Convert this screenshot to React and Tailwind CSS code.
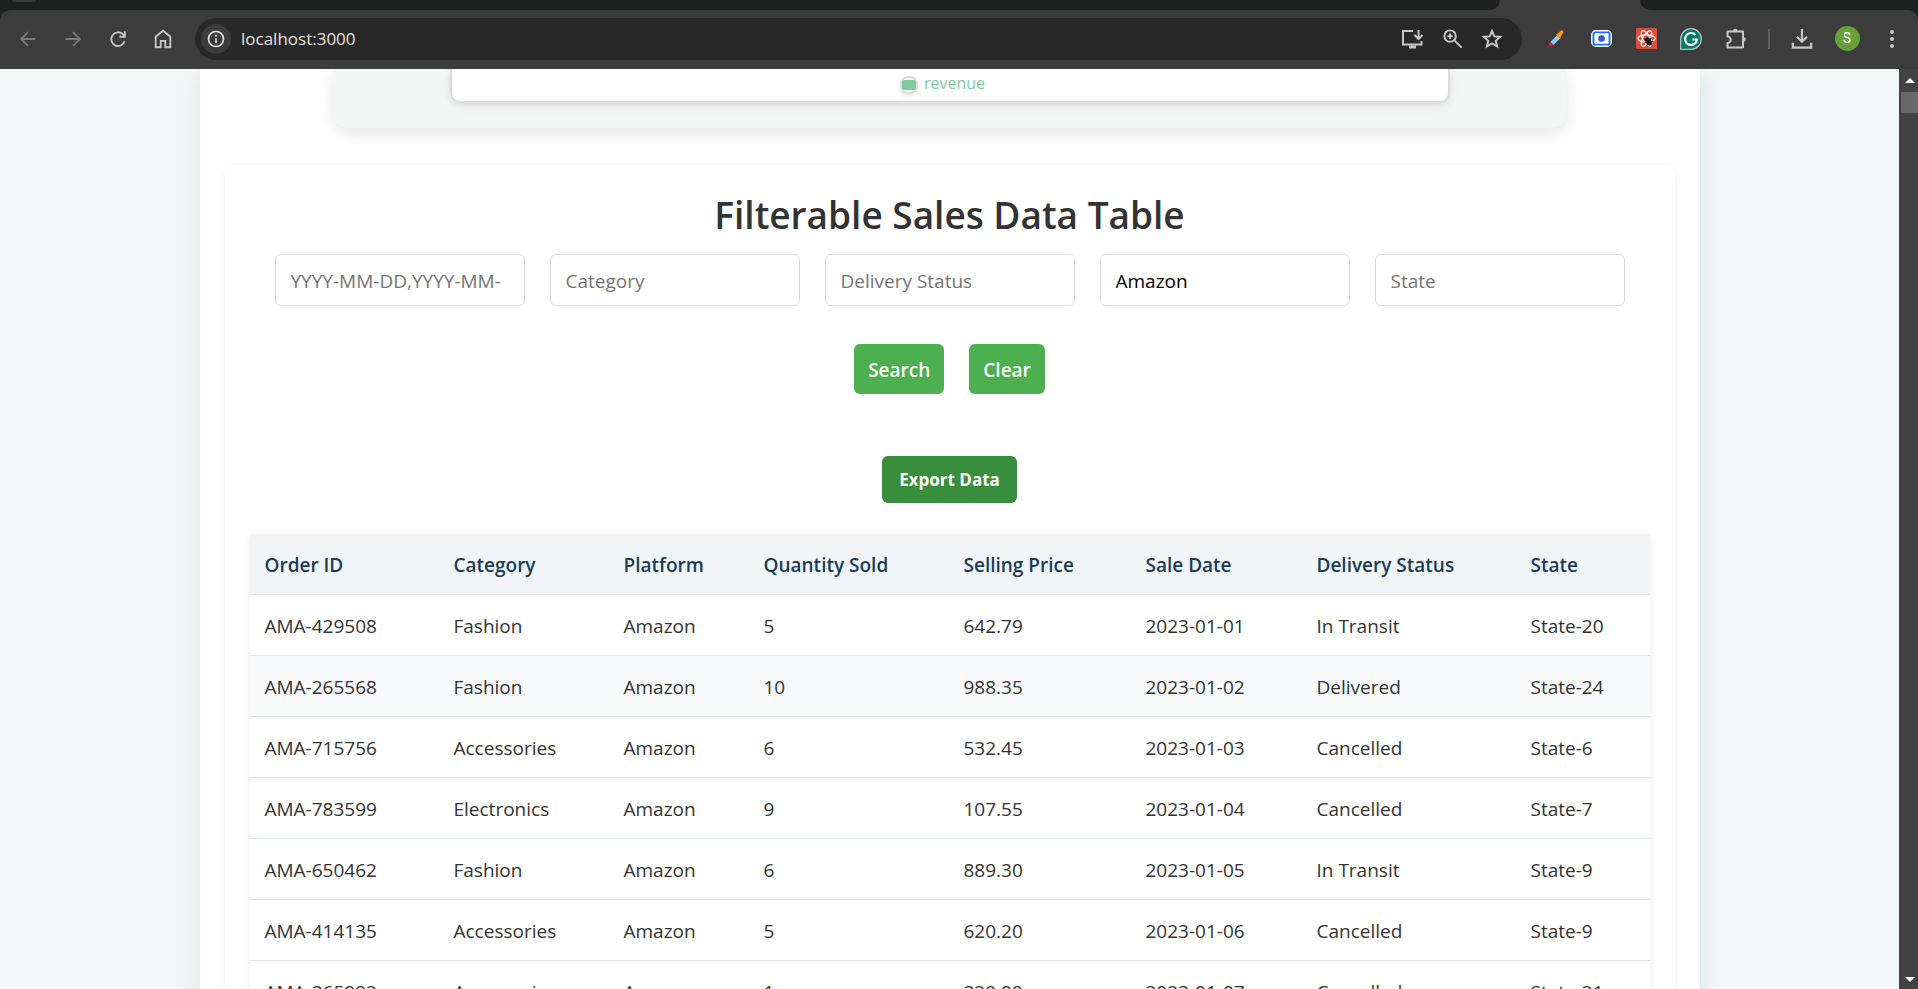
const columns = [
  ["Order ID", "w-[189px]"],
  ["Category", "w-[170px]"],
  ["Platform", "w-[140px]"],
  ["Quantity Sold", "w-[200px]"],
  ["Selling Price", "w-[182px]"],
  ["Sale Date", "w-[171px]"],
  ["Delivery Status", "w-[214px]"],
  ["State", ""],
];

const rows = [
  ["AMA-429508", "Fashion", "Amazon", "5", "642.79", "2023-01-01", "In Transit", "State-20"],
  ["AMA-265568", "Fashion", "Amazon", "10", "988.35", "2023-01-02", "Delivered", "State-24"],
  ["AMA-715756", "Accessories", "Amazon", "6", "532.45", "2023-01-03", "Cancelled", "State-6"],
  ["AMA-783599", "Electronics", "Amazon", "9", "107.55", "2023-01-04", "Cancelled", "State-7"],
  ["AMA-650462", "Fashion", "Amazon", "6", "889.30", "2023-01-05", "In Transit", "State-9"],
  ["AMA-414135", "Accessories", "Amazon", "5", "620.20", "2023-01-06", "Cancelled", "State-9"],
  ["AMA-365992", "Accessories", "Amazon", "1", "329.09", "2023-01-07", "Cancelled", "State-21"],
];

const filters = [
  { label: "Date range", placeholder: "YYYY-MM-DD,YYYY-MM-DD" },
  { label: "Category", placeholder: "Category" },
  { label: "Delivery status", placeholder: "Delivery Status" },
  { label: "Platform", placeholder: "Platform", value: "Amazon" },
  { label: "State", placeholder: "State" },
];

function Svg({ children, size = 24, className = "" }) {
  return (
    <svg
      width={size}
      height={size}
      viewBox="0 0 24 24"
      fill="none"
      stroke="currentColor"
      strokeWidth="2"
      className={className}
      aria-hidden="true"
    >
      {children}
    </svg>
  );
}

function IconButton({ label, className = "", children }) {
  return (
    <button aria-label={label} className={`flex h-8 w-8 shrink-0 items-center justify-center ${className}`}>
      {children}
    </button>
  );
}

function TabStrip() {
  return (
    <div className="flex h-[10px] shrink-0 items-stretch bg-[#3c3c3c]">
      <div className="flex flex-1 items-start rounded-br-[14px] bg-[#1f2120] pl-3">
        <div className="h-[2px] w-6 rounded-b-full bg-[#3c3c3c]" />
      </div>
      <div className="w-[140px]" />
      <div className="w-[278px] rounded-bl-[14px] bg-[#1f2120]" />
    </div>
  );
}

function Toolbar() {
  return (
    <header className="bg-[#1f2120]">
      <div className="flex h-[59px] items-center rounded-t-[10px] bg-[#3c3c3c] pr-[10px] pb-[2px] pl-[12px] text-[#c7c7c7]">
        <nav className="flex gap-[13px]">
          <IconButton label="Back" className="text-[#7b7b7b]">
            <Svg size={22}><path d="M20 12H4.5M12 4.5 4.5 12l7.5 7.5" /></Svg>
          </IconButton>
          <IconButton label="Forward" className="text-[#7b7b7b]">
            <Svg size={22}><path d="M4 12h15.500M12 4.5 19.5 12 12 19.5" /></Svg>
          </IconButton>
          <IconButton label="Reload">
            <Svg size={22}><path d="M19.300 14.500A7.500 7.500 0 1 1 17.300 6.700L19.500 9M19.500 3.500v6h-6" /></Svg>
          </IconButton>
          <IconButton label="Home">
            <Svg size={22}><path d="M4 21V9.5L12 3l8 6.500V21h-5.500v-7h-5v7z" /></Svg>
          </IconButton>
        </nav>

        <div className="ml-[16px] flex h-[42px] flex-1 items-center rounded-full bg-[#282828] pr-[14px] pl-[6px]">
          <button
            aria-label="Site information"
            className="flex h-[30px] w-[30px] items-center justify-center rounded-full bg-[#3c3c3c] text-[#e3e3e3]"
          >
            <Svg size={20}>
              <circle cx="12" cy="12" r="9" />
              <path d="M12 11v6M12 7v2" />
            </Svg>
          </button>
          <input
            aria-label="Address"
            defaultValue="localhost:3000"
            className="ml-[10px] min-w-0 flex-1 bg-transparent font-['Open_Sans',sans-serif] text-[17px] text-[#e3e3e3] outline-none"
          />
          <div className="flex gap-2">
            <IconButton label="Install app">
              <Svg>
                <path d="M13 4H3v13.500h18.500V14M18.500 3v8.500M14.500 8l4 4 4-4" />
                <path d="M9 20h7" strokeWidth="3" />
              </Svg>
            </IconButton>
            <IconButton label="Zoom">
              <Svg size={23}>
                <circle cx="9.5" cy="9.5" r="6" />
                <path d="m14 14 7.500 7.500M9.500 6.500v6M6.500 9.500h6" />
              </Svg>
            </IconButton>
            <IconButton label="Bookmark">
              <Svg>
                <path d="m12 4 2.300 5.400 5.900.5-4.500 3.900 1.400 5.700-5.100-3-5.100 3 1.400-5.700-4.500-3.900 5.900-.5z" />
              </Svg>
            </IconButton>
          </div>
        </div>

        <div className="ml-[18px] flex items-center gap-[13px]">
          <IconButton label="Color picker">
            <svg width="18" height="18" viewBox="0 0 20 20" aria-hidden="true">
              <path d="M1.500 18.500 4 12.500l4 3.500z" fill="#e91e63" />
              <path d="m4 13 7-7 3.500 3.500-7 7z" fill="#90caf9" />
              <path d="m10 5 2-1 3-3q2-1.500 3 .5.5 1-.5 2.500l-2 3-1 3z" fill="#ff9800" />
            </svg>
          </IconButton>
          <IconButton label="Screen capture">
            <svg width="21" height="17" viewBox="0 0 22 18" aria-hidden="true">
              <rect x="0" y="0" width="22" height="18" rx="5" fill="#fff" />
              <rect x="2.500" y="2.500" width="17" height="13" rx="2" fill="#fff" stroke="#1a73ff" strokeWidth="2" />
              <circle cx="11" cy="9" r="3.500" fill="#3f51d8" />
            </svg>
          </IconButton>
          <IconButton label="React developer tools">
            <svg width="21" height="21" viewBox="0 0 22 22" aria-hidden="true">
              <rect width="22" height="22" rx="1" fill="#dd4b39" />
              <g fill="none" stroke="#fff" strokeWidth="1.300">
                <ellipse cx="11" cy="11" rx="9" ry="3.800" />
                <ellipse cx="11" cy="11" rx="9" ry="3.800" transform="rotate(60 11 11)" />
                <ellipse cx="11" cy="11" rx="9" ry="3.800" transform="rotate(120 11 11)" />
              </g>
              <ellipse cx="13" cy="14" rx="3" ry="4.500" fill="#1b1b1b" transform="rotate(-35 13 14)" />
              <path d="m8 11 9 7M16 10l-5 9M9 15l9-1" stroke="#1b1b1b" strokeWidth="1.200" />
            </svg>
          </IconButton>
          <IconButton label="Grammarly">
            <svg width="22" height="22" viewBox="0 0 22 22" aria-hidden="true">
              <path d="M11 .7A10.300 10.300 0 1 1 11 21.300H.7V11A10.300 10.300 0 0 1 11 .7z" fill="#00796b" stroke="#b5c5c2" strokeWidth="1.200" />
              <path d="M15.500 7A6 6 0 1 0 17 11.500h-4.500" fill="none" stroke="#fff" strokeWidth="2.200" />
            </svg>
          </IconButton>
          <IconButton label="Extensions">
            <Svg>
              <path d="M3.500 4.500H19v16H3.500v-4.500a3 3 0 0 0 0-6.500z" strokeLinejoin="round" />
              <path d="M9 4a2.300 2.300 0 0 1 4.600 0zM19.500 10.200a2.300 2.300 0 0 1 0 4.600z" fill="currentColor" stroke="none" />
            </Svg>
          </IconButton>
        </div>
        <div className="mx-[16px] h-5 w-[2px] bg-[#5e5e5e]" />
        <div className="flex items-center gap-[13px]">
          <IconButton label="Downloads">
            <Svg size={22}>
              <path d="M12 1v14M6.500 9.500 12 15l5.500-5.500M2 16v5.500h20V16" strokeWidth="2.400" />
            </Svg>
          </IconButton>
          <IconButton label="Profile">
            <span className="flex h-[25px] w-[25px] items-center justify-center rounded-full bg-[#689f38] font-['Roboto',sans-serif] text-[14px] text-white">
              S
            </span>
          </IconButton>
          <IconButton label="Menu">
            <svg width="6" height="20" viewBox="0 0 6 20" fill="currentColor" aria-hidden="true">
              <circle cx="3" cy="3" r="2" />
              <circle cx="3" cy="10" r="2" />
              <circle cx="3" cy="17" r="2" />
            </svg>
          </IconButton>
        </div>
      </div>
    </header>
  );
}

function RevenueChartFooter() {
  return (
    <section className="mx-[108px] rounded-b-[15px] bg-[#f4f6f6] px-[117px] pb-[25px] shadow-[0_5px_15px_rgba(0,0,0,0.1)]">
      <div className="flex h-[34px] items-start justify-center gap-[6px] rounded-b-[10px] border-2 border-t-0 border-[#ddd] bg-white pt-[2px] pr-[14px] shadow-[0_3px_8px_rgba(0,0,0,0.1)]">
        <span className="mt-[5px] flex h-[18px] w-[18px] items-center justify-center rounded-[8px] border-2 border-[#ddd] bg-white shadow-[0_2px_5px_rgba(0,0,0,0.1)]">
          <span className="h-[10px] w-[14px] rounded-[2px] bg-[#82ca9d]" />
        </span>
        <span className="text-[16px] leading-[24px] text-[#82ca9d]">revenue</span>
      </div>
    </section>
  );
}

function SalesTable() {
  return (
    <table className="w-full table-fixed border-collapse bg-white text-left text-[19px] leading-[30px] text-[#333] shadow-[0_2px_8px_rgba(0,0,0,0.08)]">
      <colgroup>
        {columns.map(([name, width]) => (
          <col key={name} className={width} />
        ))}
      </colgroup>
      <thead>
        <tr className="h-[60px] border-b border-[#dee5eb] bg-[#f1f5f8] text-[#1a3c5a]">
          {columns.map(([name]) => (
            <th key={name} scope="col" className="px-[15px] pt-[3px] font-semibold whitespace-nowrap">
              {name}
            </th>
          ))}
        </tr>
      </thead>
      <tbody>
        {rows.map((row, index) => (
          <tr key={row[0]} className={`h-[61px] border-b border-[#dee5eb] ${index === 1 ? "bg-[#f8fafc]" : ""}`}>
            {row.map((cell, i) => (
              <td key={columns[i][0]} className="px-[15px] pt-[2px]">
                {cell}
              </td>
            ))}
          </tr>
        ))}
      </tbody>
    </table>
  );
}

function SalesDataCard() {
  return (
    <section className="mt-[37px] rounded-t-[10px] bg-white px-[25px] pt-[25px] shadow-[0_2px_10px_rgba(0,0,0,0.06)]">
      <h2 className="text-center text-[37px] leading-[50px] font-semibold text-[#333]">Filterable Sales Data Table</h2>
      <form className="mt-[14px]" onSubmit={(e) => e.preventDefault()}>
        <div className="flex flex-wrap justify-center gap-[25px]">
          {filters.map((f) => (
            <input
              key={f.label}
              aria-label={f.label}
              placeholder={f.placeholder}
              defaultValue={f.value}
              className="h-[52px] w-[250px] rounded-[6px] border border-[#ddd] bg-white pt-[2px] pr-[22px] pl-[15px] text-[19px] text-black outline-none placeholder:text-[#757575]"
            />
          ))}
        </div>
        <div className="mt-[38px] flex justify-center gap-[25px]">
          <button type="submit" className="h-[50px] rounded-[6px] bg-[#4caf50] px-[14px] pt-[2px] text-[19px] font-semibold text-white">
            Search
          </button>
          <button type="reset" className="h-[50px] rounded-[6px] bg-[#4caf50] px-[14px] pt-[2px] text-[19px] font-semibold text-white">
            Clear
          </button>
        </div>
      </form>
      <div className="mt-[62px] mb-[31px] flex justify-center">
        <button className="h-[47px] rounded-[6px] bg-[#388e3c] px-[17px] text-[17px] font-bold text-white">
          Export Data
        </button>
      </div>
      <SalesTable />
    </section>
  );
}

function Scrollbar() {
  return (
    <div className="flex w-[19px] shrink-0 flex-col items-end justify-between bg-[#424242]">
      <div className="flex w-[17px] flex-col items-center">
        <svg width="10" height="23" viewBox="0 0 10 23" fill="#fff" aria-hidden="true">
          <path d="M5 9 10 14H0z" />
        </svg>
        <div className="h-[21px] w-[17px] bg-[#686868]" />
      </div>
      <svg width="17" height="17" viewBox="0 0 17 17" fill="#fff" aria-hidden="true">
        <path d="M4 5h10l-5 5z" />
      </svg>
    </div>
  );
}

export default function App() {
  return (
    <div className="flex h-screen flex-col overflow-hidden font-['Open_Sans','Noto_Sans',sans-serif]">
      <TabStrip />
      <Toolbar />
      <div className="flex min-h-0 flex-1">
        <div className="flex-1 overflow-hidden bg-[#f2f7fa]">
          <main className="mx-auto max-w-[1500px] bg-white px-[25px] shadow-[0_5px_20px_rgba(0,0,0,0.1)]">
            <RevenueChartFooter />
            <SalesDataCard />
          </main>
        </div>
        <Scrollbar />
      </div>
    </div>
  );
}
